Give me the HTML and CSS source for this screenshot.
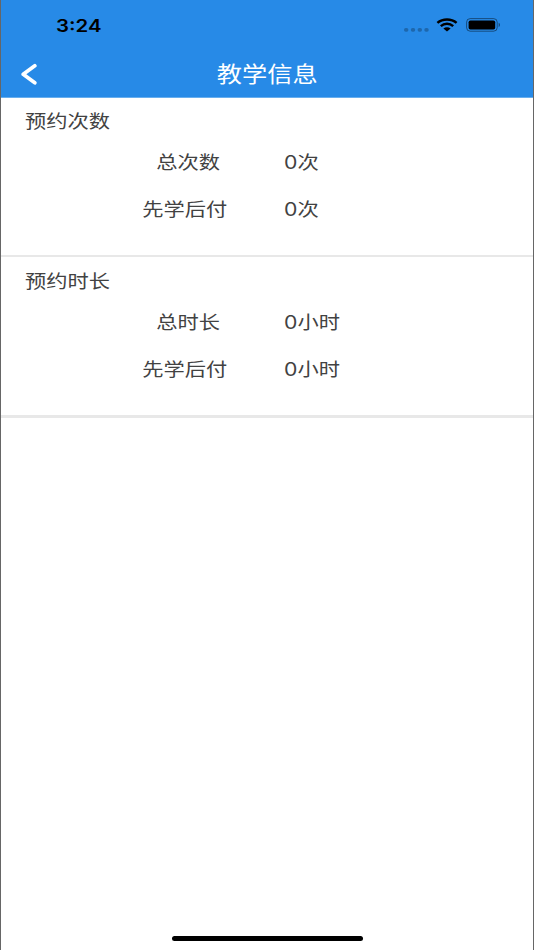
FILE: index.html
```html
<!DOCTYPE html>
<html lang="zh-CN">
<head>
    <meta charset="UTF-8">
    <meta name="viewport" content="width=device-width, initial-scale=1.0">
    <title>教学信息</title>
    <link rel="stylesheet" href="styles.css">
</head>
<body>
    <div class="screen">
        <header class="header">
            <div class="status-bar">
                <span class="time">3:24</span>
                <div class="status-icons">
                    <svg class="signal" width="25" height="4" viewBox="0 0 25 4">
                        <rect x="0" y="0" width="4.4" height="3.8" rx="1.7"/>
                        <rect x="6.8" y="0" width="4.4" height="3.8" rx="1.7"/>
                        <rect x="13.6" y="0" width="4.4" height="3.8" rx="1.7"/>
                        <rect x="20.3" y="0" width="4.4" height="3.8" rx="1.7"/>
                    </svg>
                    <svg class="wifi" width="22" height="14" viewBox="0 0 22 14">
                        <path d="M1.4 4.9C6.7 .3 15.3 .3 20.6 4.9M4.8 8.1C8.3 5.1 13.7 5.1 17.2 8.1" fill="none" stroke="#000" stroke-width="2.5"/>
                        <path d="M7.4 10.4C9.4 8.7 12.6 8.7 14.6 10.4L11 13.5Z"/>
                    </svg>
                    <svg class="battery" width="35" height="14" viewBox="0 0 35 14">
                        <rect x=".6" y=".6" width="30.6" height="12.6" rx="3.6" fill="none" stroke="#000" stroke-opacity=".45"/>
                        <rect x="2.6" y="2.4" width="26.6" height="9.1" rx="1.8"/>
                        <path d="M32.7 4.8C34.4 5.4 34.4 8.4 32.7 9Z" fill-opacity=".5"/>
                    </svg>
                </div>
            </div>
            <nav class="nav-bar">
                <svg class="back" width="18" height="22" viewBox="0 0 18 22">
                    <path d="M14.8 2.8L3.2 11.3L14.8 19.8" fill="none" stroke="#fff" stroke-width="3.7" stroke-linecap="round" stroke-linejoin="round"/>
                </svg>
                <h1>教学信息</h1>
            </nav>
        </header>
        <main>
            <section class="block">
                <h2><span class="wide">预约次数</span></h2>
                <div class="row">
                    <span class="label short">总次数</span>
                    <span class="value">0次</span>
                </div>
                <div class="row">
                    <span class="label">先学后付</span>
                    <span class="value">0次</span>
                </div>
            </section>
            <section class="block last">
                <h2><span class="wide">预约时长</span></h2>
                <div class="row">
                    <span class="label short">总时长</span>
                    <span class="value">0小时</span>
                </div>
                <div class="row">
                    <span class="label">先学后付</span>
                    <span class="value">0小时</span>
                </div>
            </section>
        </main>
        <div class="home-indicator"></div>
    </div>
</body>
</html>
```

FILE: styles.css
```css
body {
    margin: 0;
    background-color: #fff;
    color: #424242;
    font-family: Inter, "Noto Sans CJK SC", sans-serif;
}
.screen {
    display: flex;
    flex-direction: column;
    height: 950px;
    box-sizing: border-box;
    border-left: 1px solid rgba(0, 0, 0, 0.6);
    border-right: 1px solid rgba(0, 0, 0, 0.6);
    background-color: #fff;
}
main {
    flex: 1;
}
.header {
    height: 98px;
    box-sizing: border-box;
    background-color: #278ae7;
    border-bottom: 1px solid #68aeee;
}
.status-bar {
    display: flex;
    justify-content: space-between;
    height: 50px;
    padding: 0 32px 0 55px;
}
.time {
    color: #000;
    font-size: 17px;
    font-weight: 600;
    line-height: 52px;
    transform: scaleX(1.2);
    transform-origin: left;
}
.status-icons {
    display: flex;
    align-items: flex-start;
    padding-top: 18px;
}
.signal {
    margin: 10px 7px 0 0;
    fill: rgba(0, 0, 0, 0.25);
}
.wifi {
    margin-right: 8px;
}
.nav-bar {
    display: grid;
    grid-template-columns: 60px 1fr 60px;
    align-items: center;
    height: 47px;
}
.back {
    margin-left: 19px;
}
h1 {
    justify-self: center;
    margin: 0;
    color: #fff;
    font-size: 21.6px;
    font-weight: 400;
    line-height: 45px;
    padding-top: 2px;
    transform: scaleX(1.17);
}
.block {
    height: 157px;
    border-bottom: 2px solid #e8e8e8;
}
.block.last {
    height: 158px;
    border-bottom-width: 3px;
}
h2 {
    height: 41px;
    margin: 0;
    padding: 3px 0 0 24px;
    box-sizing: border-box;
    font-size: 18.4px;
    font-weight: 400;
    line-height: 41px;
}
.block.last h2 {
    height: 42px;
    padding-top: 4px;
}
/* glyphs are a little wider than they are tall */
.wide {
    display: inline-block;
    transform: scaleX(1.155);
    transform-origin: left;
}
.row {
    display: grid;
    grid-template-columns: 99px 170px 1fr;
    height: 47px;
    font-size: 18.4px;
    line-height: 46px;
}
.block.last .row {
    line-height: 47px;
}
.label {
    grid-column: 2;
    justify-self: center;
    transform: scaleX(1.155);
}
.label.short {
    padding-left: 6px;
}
.value {
    justify-self: start;
    margin-left: 14px;
    transform: scaleX(1.155);
    transform-origin: left;
}
.home-indicator {
    align-self: center;
    width: 191px;
    height: 5px;
    margin-bottom: 9px;
    border-radius: 3px;
    background-color: #000;
}
```
